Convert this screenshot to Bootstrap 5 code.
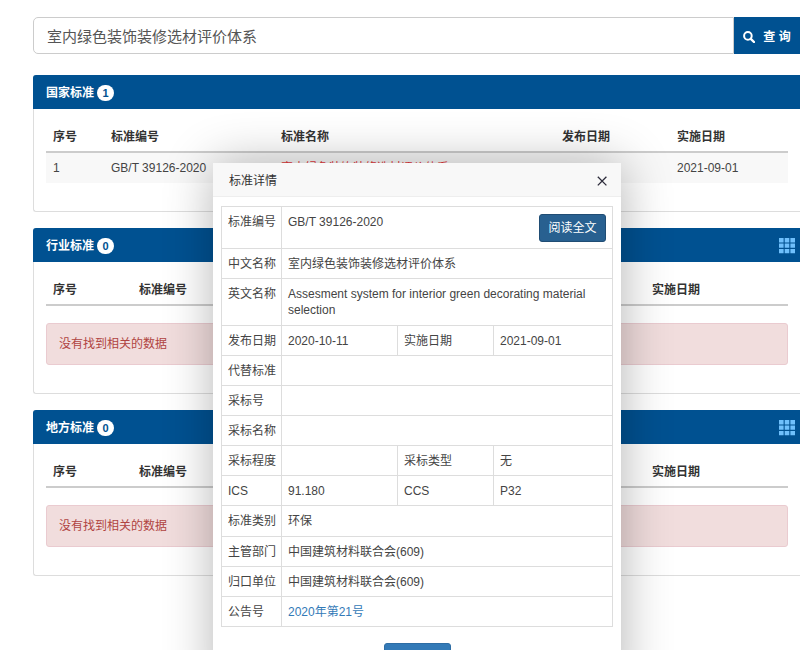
<!DOCTYPE html>
<html lang="zh-CN">
<head>
<meta charset="utf-8">
<meta name="viewport" content="width=device-width, initial-scale=1">
<title>标准查询</title>
<link href="https://cdn.jsdelivr.net/npm/bootstrap@5.3.0/dist/css/bootstrap.min.css" rel="stylesheet">
<style>
  body { font: 12px/16px "Liberation Sans", "Noto Sans CJK SC", sans-serif; color: #333; background: #fff; overflow: hidden; }
  .page-wrap { padding: 17px 0 0 33px; }
  .search-bar { margin-bottom: 21px; }
  .search-bar .form-control { height: 37px; padding: 0 13px; font-size: 15px; color: #555; border-color: #ccc; border-radius: 5px; }
  .search-bar .btn { width: 66px; padding: 2px 0 0; font-size: 12px; font-weight: 700; color: #fff; background: #005191; border: 0; border-radius: 0; }
  .std-panel { margin-bottom: 16px; border: 1px solid #ddd; border-right: 0; border-radius: 3px 0 0 3px; }
  .std-panel .card-header { height: 34px; margin: -1px 0 0 -1px; padding: 1px 5px 0 13px; color: #fff; background: #005191; border: 0; border-radius: 3px 0 0 0; }
  .std-panel .card-header h2 { margin: 0; font-size: 12px; line-height: 16px; font-weight: 700; }
  .std-panel .card-body { padding: 13px 12px 28px; }
  .std-panel .badge { width: 17px; height: 16px; margin-left: 3px; padding: 0; font-size: 11px; line-height: 16px; color: #005191; background: #fff; border-radius: 8px; }
  .grid-btn { padding: 0; line-height: 1; border: 0; background: none; color: #6fc0fc; }
  .result-table { table-layout: fixed; margin: 0; color: #444; }
  .result-table th { padding: 7px 7px 6px; color: #333; border-bottom: 2px solid #ccc; white-space: nowrap; }
  .result-table td { padding: 7px; background: #f8f8f8; border: 0; white-space: nowrap; }
  .result-table .hit { color: #e4393c; }
  .empty-note { margin: 17px 0 0; padding: 12px; color: #b04441; background: #f1dddd; border: 1px solid #eacbd0; border-radius: 3px; line-height: 16px; }
  .w-a1 { width: 58px; } .w-a2 { width: 170px; } .w-a4 { width: 115px; } .w-a5 { width: 118px; }
  .w-b1 { width: 86px; } .w-b2 { width: 170px; } .w-b4 { width: 143px; } .w-b5 { width: 143px; }
  .detail-dialog { position: absolute; top: 163px; left: 213px; width: 408px; background: #fff; border-radius: 2px; box-shadow: 1px 1px 50px rgba(0, 0, 0, .3); }
  .detail-head { height: 34px; padding: 2px 13px 0 16px; background: #f8f8f8; border-bottom: 1px solid #eee; }
  .detail-head h1 { margin: 0; font-size: 12px; line-height: 16px; font-weight: 400; }
  .close-btn { padding: 0; border: 0; background: none; color: #2d2c3b; line-height: 1; }
  .detail-body { padding: 9px 8px 24px; }
  .detail-table { height: 421px; margin: 0 0 16px; table-layout: fixed; color: #444; border-color: #ddd; }
  .detail-table th, .detail-table td { padding: 7px 6px 6px; font-weight: 400; vertical-align: top; border: 1px solid #ddd; background: none; }
  .detail-table th { padding-right: 0; white-space: nowrap; }
  .w-key { width: 60px; } .w-val { width: 116px; } .w-key2 { width: 96px; }
  .detail-table a { color: #337ab7; text-decoration: none; }
  .btn-read, .btn-shut { width: 67px; height: 28px; padding: 0; font-size: 12px; line-height: 16px; color: #fff; border-radius: 3px; }
  .btn-read { background: #286090; border: 1px solid #204d74; }
  .btn-shut { background: #337ab7; border: 1px solid #2e6da4; }
</style>
</head>
<body>
<svg class="d-none" aria-hidden="true">
  <symbol id="grid-icon" viewBox="0 0 16 16">
    <path fill="currentColor" d="M0 0h4.6v4.4H0zM5.7 0h4.6v4.4H5.7zM11.4 0H16v4.4h-4.6zM0 5.4h4.6v4.4H0zM5.7 5.4h4.6v4.4H5.7zM11.4 5.4H16v4.4h-4.6zM0 10.9h4.6v4.4H0zM5.7 10.9h4.6v4.4H5.7zM11.4 10.9H16v4.4h-4.6z"/>
  </symbol>
</svg>

<main class="page-wrap">
  <form class="search-bar d-flex" role="search">
    <input type="text" class="form-control flex-fill rounded-end-0" aria-label="标准关键词" value="室内绿色装饰装修选材评价体系">
    <button type="button" class="btn d-flex align-items-center justify-content-center gap-2 flex-shrink-0">
      <svg width="12" height="12" viewBox="0 0 12 12" aria-hidden="true"><circle cx="4.9" cy="4.9" r="3.8" fill="none" stroke="#fff" stroke-width="2"/><path d="M7.8 7.8l3.2 3.2" stroke="#fff" stroke-width="2.4" stroke-linecap="round"/></svg>
      <span>查 询</span>
    </button>
  </form>

  <section class="card std-panel">
    <div class="card-header d-flex align-items-center"><h2>国家标准</h2><span class="badge">1</span></div>
    <div class="card-body">
      <table class="table result-table">
        <thead><tr><th class="w-a1">序号</th><th class="w-a2">标准编号</th><th>标准名称</th><th class="w-a4">发布日期</th><th class="w-a5">实施日期</th></tr></thead>
        <tbody><tr><td>1</td><td>GB/T 39126-2020</td><td class="hit">室内绿色装饰装修选材评价体系</td><td></td><td>2021-09-01</td></tr></tbody>
      </table>
    </div>
  </section>

  <section class="card std-panel">
    <div class="card-header d-flex align-items-center"><h2>行业标准</h2><span class="badge">0</span>
      <button type="button" class="grid-btn ms-auto" aria-label="行业标准列表"><svg width="16" height="16"><use href="#grid-icon"/></svg></button></div>
    <div class="card-body">
      <table class="table result-table">
        <thead><tr><th class="w-b1">序号</th><th class="w-b2">标准编号</th><th></th><th class="w-b4"></th><th class="w-b5">实施日期</th></tr></thead>
      </table>
      <div class="alert empty-note" role="alert">没有找到相关的数据</div>
    </div>
  </section>

  <section class="card std-panel">
    <div class="card-header d-flex align-items-center"><h2>地方标准</h2><span class="badge">0</span>
      <button type="button" class="grid-btn ms-auto" aria-label="地方标准列表"><svg width="16" height="16"><use href="#grid-icon"/></svg></button></div>
    <div class="card-body">
      <table class="table result-table">
        <thead><tr><th class="w-b1">序号</th><th class="w-b2">标准编号</th><th></th><th class="w-b4"></th><th class="w-b5">实施日期</th></tr></thead>
      </table>
      <div class="alert empty-note" role="alert">没有找到相关的数据</div>
    </div>
  </section>
</main>

<div class="detail-dialog" role="dialog" aria-labelledby="detail-title">
  <div class="detail-head d-flex align-items-center justify-content-between">
    <h1 id="detail-title">标准详情</h1>
    <button type="button" class="close-btn" aria-label="关闭"><svg width="12" height="12" viewBox="0 0 12 12"><path d="M1.8 1.8l8.6 8.6M10.4 1.8l-8.6 8.6" stroke="currentColor" stroke-width="1.3"/></svg></button>
  </div>
  <div class="detail-body">
    <table class="table detail-table">
      <colgroup><col class="w-key"><col class="w-val"><col class="w-key2"><col></colgroup>
      <tbody>
        <tr><th scope="row">标准编号</th><td colspan="3"><div class="d-flex justify-content-between"><span>GB/T 39126-2020</span><button type="button" class="btn btn-read">阅读全文</button></div></td></tr>
        <tr><th scope="row">中文名称</th><td colspan="3">室内绿色装饰装修选材评价体系</td></tr>
        <tr><th scope="row">英文名称</th><td colspan="3">Assesment system for interior green decorating material selection</td></tr>
        <tr><th scope="row">发布日期</th><td>2020-10-11</td><th scope="row">实施日期</th><td>2021-09-01</td></tr>
        <tr><th scope="row">代替标准</th><td colspan="3"></td></tr>
        <tr><th scope="row">采标号</th><td colspan="3"></td></tr>
        <tr><th scope="row">采标名称</th><td colspan="3"></td></tr>
        <tr><th scope="row">采标程度</th><td></td><th scope="row">采标类型</th><td>无</td></tr>
        <tr><th scope="row">ICS</th><td>91.180</td><th scope="row">CCS</th><td>P32</td></tr>
        <tr><th scope="row">标准类别</th><td colspan="3">环保</td></tr>
        <tr><th scope="row">主管部门</th><td colspan="3">中国建筑材料联合会(609)</td></tr>
        <tr><th scope="row">归口单位</th><td colspan="3">中国建筑材料联合会(609)</td></tr>
        <tr><th scope="row">公告号</th><td colspan="3"><a href="#">2020年第21号</a></td></tr>
      </tbody>
    </table>
    <div class="text-center"><button type="button" class="btn btn-shut" aria-label="关闭"></button></div>
  </div>
</div>
<script src="https://cdn.jsdelivr.net/npm/bootstrap@5.3.0/dist/js/bootstrap.bundle.min.js"></script>
</body>
</html>
